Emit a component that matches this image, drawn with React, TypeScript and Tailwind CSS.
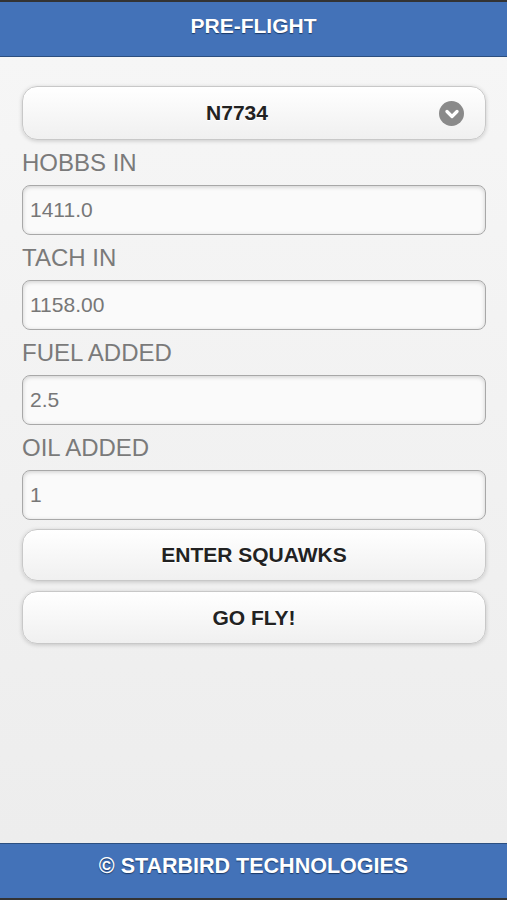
import React from 'react';

const fields = [
  { label: 'HOBBS IN', value: '1411.0' },
  { label: 'TACH IN', value: '1158.00' },
  { label: 'FUEL ADDED', value: '2.5' },
  { label: 'OIL ADDED', value: '1' },
];

const btn =
  'w-full flex items-center justify-center border border-[#c8c8c8] rounded-[15px] bg-gradient-to-b from-white to-[#f0f0f0] shadow-[0_1px_4px_rgba(0,0,0,0.18)] text-[21px] font-bold text-[#222] [text-shadow:0_1px_0_#fff]';

const App: React.FC = () => {
  return (
    <div className="h-[900px] flex flex-col font-['Liberation_Sans',Arial,sans-serif]">
      {/* Header */}
      <div className="h-[57px] shrink-0 border-t-2 border-t-[#333] border-b border-b-[#2c4f80] bg-[#4372b8] pt-[11px] text-center">
        <h1 className="text-[21px] leading-[25px] font-bold text-white [text-shadow:0_1px_1px_#1d3a66]">PRE-FLIGHT</h1>
      </div>

      {/* Content */}
      <div className="flex-1 bg-gradient-to-b from-[#f6f6f6] to-[#ededed] pl-[22px] pr-[21px] pt-[29px]">
        <button className={`${btn} relative h-[54px] pr-[34px]`}>
          N7734
          <span className="absolute right-[21px] top-[14px] w-[25px] h-[25px] rounded-full bg-[#8a8a8a] flex items-center justify-center">
            <svg width="14" height="10" viewBox="0 0 14 10">
              <path d="M2 2.5 L7 7.5 L12 2.5" fill="none" stroke="#fff" strokeWidth="3.2" strokeLinecap="round" strokeLinejoin="round" />
            </svg>
          </span>
        </button>

        {fields.map(f => (
          <div key={f.label}>
            <div className="mt-[9px] mb-[9px] text-[24px] leading-[27px] text-[#7a7a7a]">{f.label}</div>
            <input
              defaultValue={f.value}
              className="w-full h-[50px] block rounded-[8px] border border-[#a8a8a8] bg-[#fafafa] pl-[7px] text-[21px] text-[#777] shadow-[inset_0_1px_4px_rgba(0,0,0,0.18)] outline-none"
            />
          </div>
        ))}

        <button className={`${btn} h-[52px] mt-[9px]`}>ENTER SQUAWKS</button>
        <button className={`${btn} h-[53px] mt-[10px]`}>GO FLY!</button>
      </div>

      {/* Footer */}
      <div className="h-[57px] shrink-0 border-t border-t-[#2c4f80] border-b-2 border-b-[#333] bg-[#4372b8] pt-[10px] text-center">
        <div className="text-[21.5px] leading-[25px] font-bold text-white [text-shadow:0_1px_1px_#1d3a66]">© STARBIRD TECHNOLOGIES</div>
      </div>
    </div>
  );
};

export default App;
